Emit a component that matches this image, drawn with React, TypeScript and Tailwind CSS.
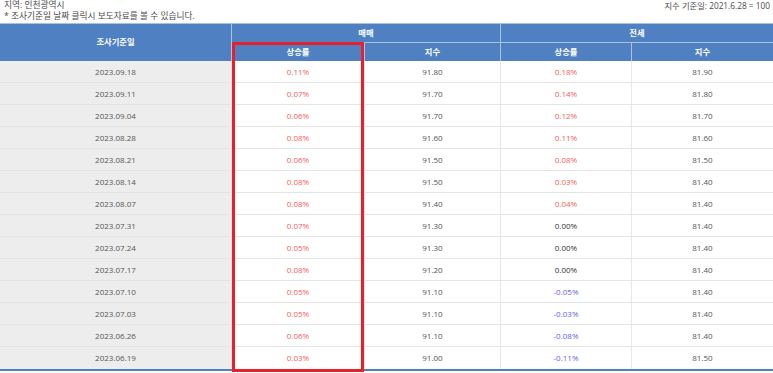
import React from "react";

const rows: [string, string, string, string, string][] = [
  ["2023.09.18", "0.11%", "91.80", "0.18%", "81.90"],
  ["2023.09.11", "0.07%", "91.70", "0.14%", "81.80"],
  ["2023.09.04", "0.06%", "91.70", "0.12%", "81.70"],
  ["2023.08.28", "0.08%", "91.60", "0.11%", "81.60"],
  ["2023.08.21", "0.06%", "91.50", "0.08%", "81.50"],
  ["2023.08.14", "0.08%", "91.50", "0.03%", "81.40"],
  ["2023.08.07", "0.08%", "91.40", "0.04%", "81.40"],
  ["2023.07.31", "0.07%", "91.30", "0.00%", "81.40"],
  ["2023.07.24", "0.05%", "91.30", "0.00%", "81.40"],
  ["2023.07.17", "0.08%", "91.20", "0.00%", "81.40"],
  ["2023.07.10", "0.05%", "91.10", "-0.05%", "81.40"],
  ["2023.07.03", "0.05%", "91.10", "-0.03%", "81.40"],
  ["2023.06.26", "0.06%", "91.10", "-0.08%", "81.40"],
  ["2023.06.19", "0.03%", "91.00", "-0.11%", "81.50"],
];

function rateClass(v: string) {
  if (v.startsWith("-")) return "text-[#5f5ff2]";
  if (v === "0.00%") return "text-[#333333]";
  return "text-[#f35b5b]";
}

export default function App() {
  return (
    <div
      className="relative w-[773px] h-[373px] bg-white overflow-hidden text-[8px] text-[#555555]"
      style={{ fontFamily: '"Open Sans", "Noto Sans CJK KR", sans-serif' }}
    >
      <div className="flex justify-between h-[23px] leading-[11px] text-[#4a4a4a]">
        <div className="pl-[4px] text-[8.7px]">
          <div>지역: 인천광역시</div>
          <div>* 조사기준일 날짜 클릭시 보도자료를 볼 수 있습니다.</div>
        </div>
        <div className="pr-[3px] text-[8.3px]">지수 기준일: 2021.6.28 = 100</div>
      </div>

      <div className="grid grid-cols-[232px_133px_136px_131px_141px] border-t border-[#a9c2e4] bg-[#4f80c1] text-white font-bold text-[8.3px]">
        <div className="row-span-2 flex items-center justify-center border-r border-[#a9c2e4]">조사기준일</div>
        <div className="col-span-2 h-[19px] flex items-center justify-center border-r border-b border-[#a9c2e4]">매매</div>
        <div className="col-span-2 h-[19px] flex items-center justify-center border-b border-[#a9c2e4]">전세</div>
        <div className="h-[18px] flex items-center justify-center border-r border-[#a9c2e4]">상승률</div>
        <div className="h-[18px] flex items-center justify-center border-r border-[#a9c2e4]">지수</div>
        <div className="h-[18px] flex items-center justify-center border-r border-[#a9c2e4]">상승률</div>
        <div className="h-[18px] flex items-center justify-center">지수</div>
      </div>

      <div className="border-b-2 border-[#4f80c1]">
        {rows.map((r) => (
          <div
            key={r[0]}
            className="grid grid-cols-[232px_133px_136px_131px_141px] h-[22px] border-b border-[#e4e4e4] last:border-b-0"
          >
            <div className="flex items-center justify-center bg-[#ededed] border-r border-[#e0e0e0]">{r[0]}</div>
            <div className={`flex items-center justify-center border-r border-[#e8e8e8] ${rateClass(r[1])}`}>{r[1]}</div>
            <div className="flex items-center justify-center border-r border-[#e8e8e8]">{r[2]}</div>
            <div className={`flex items-center justify-center border-r border-[#e8e8e8] ${rateClass(r[3])}`}>{r[3]}</div>
            <div className="flex items-center justify-center">{r[4]}</div>
          </div>
        ))}
      </div>

      <div className="absolute left-[232px] top-[42px] w-[132px] h-[330px] border-[3px] border-[#e8202a] pointer-events-none" />
    </div>
  );
}
